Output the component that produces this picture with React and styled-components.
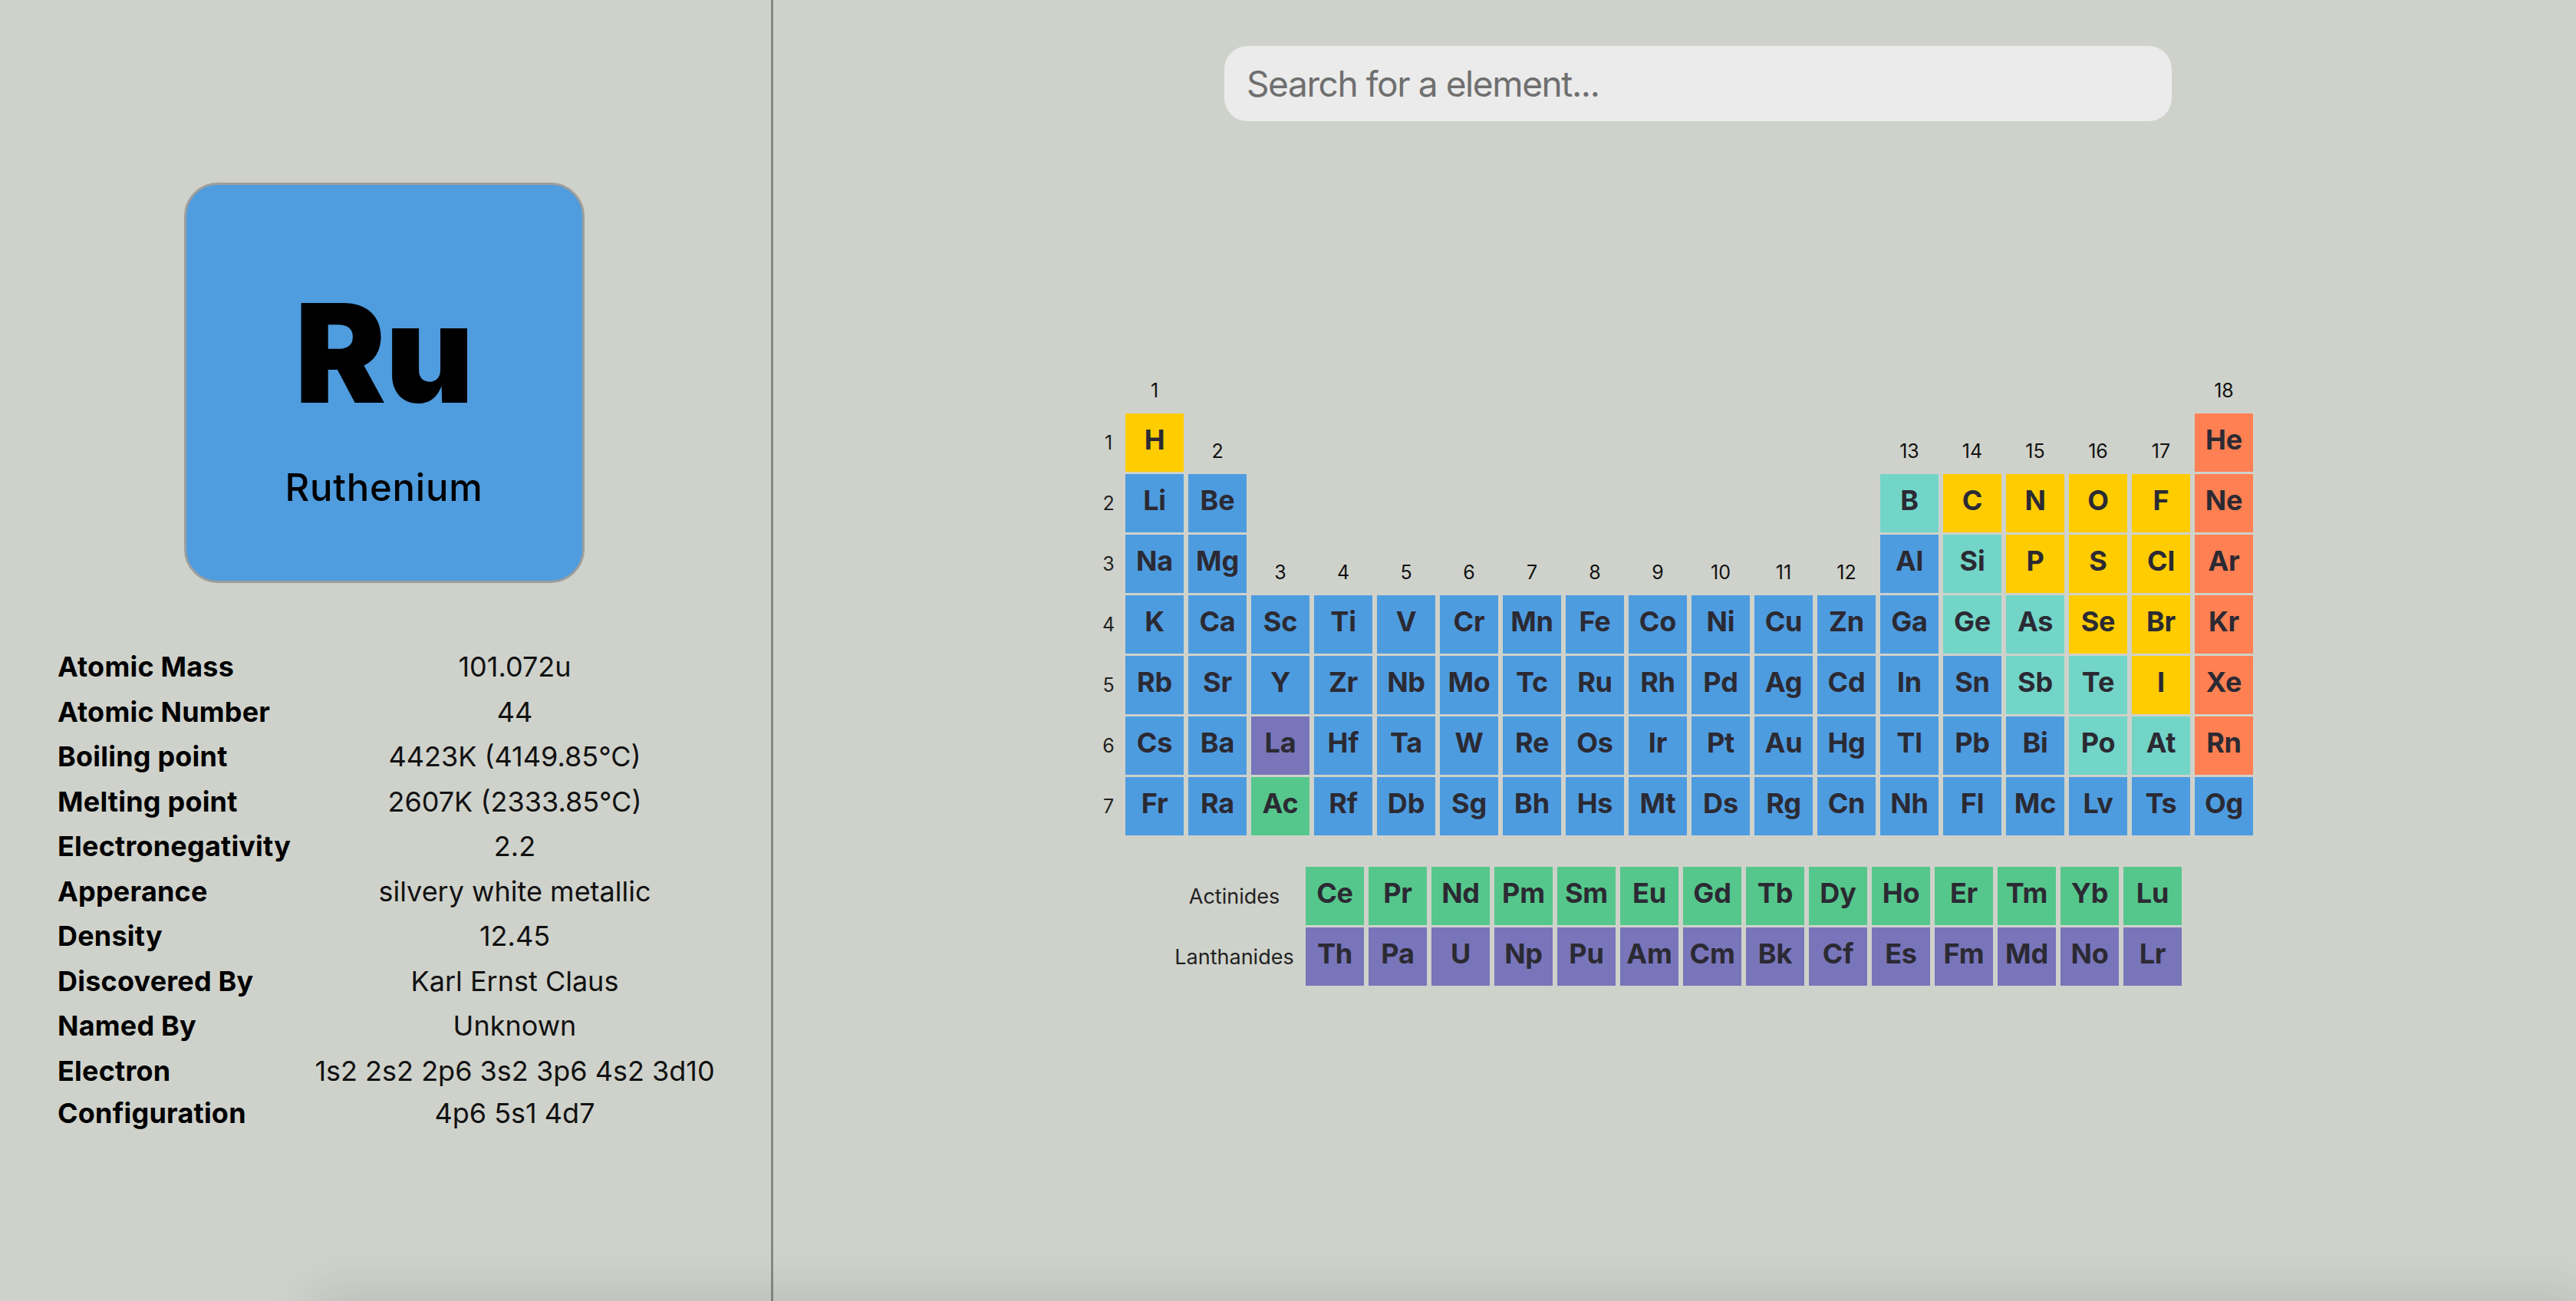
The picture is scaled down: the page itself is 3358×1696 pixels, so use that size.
import React from "react";
import styled, { createGlobalStyle } from "styled-components";

const GlobalStyle = createGlobalStyle`
  *, *::before, *::after { box-sizing: border-box; }
  html, body { margin: 0; padding: 0; }
  body {
    background: #cfd2cb;
    font-family: "Inter", "Liberation Sans", sans-serif;
    color: #111;
    overflow: hidden;
  }
`;

const COLORS = {
  blue: "#4e9ce0",
  yellow: "#ffcc00",
  teal: "#72d5c8",
  orange: "#ff8052",
  green: "#56c78c",
  purple: "#7875ba",
};

const YELLOW = ["H", "C", "N", "O", "F", "P", "S", "Cl", "Se", "Br", "I"];
const TEAL = ["B", "Si", "Ge", "As", "Sb", "Te", "Po", "At"];
const ORANGE = ["He", "Ne", "Ar", "Kr", "Xe", "Rn"];

const kindOf = (s) => {
  if (YELLOW.includes(s)) return "yellow";
  if (TEAL.includes(s)) return "teal";
  if (ORANGE.includes(s)) return "orange";
  if (s === "La") return "purple";
  if (s === "Ac") return "green";
  return "blue";
};

const ROWS = [
  [[1, "H"], [18, "He"]],
  [[1, "Li"], [2, "Be"], [13, "B"], [14, "C"], [15, "N"], [16, "O"], [17, "F"], [18, "Ne"]],
  [[1, "Na"], [2, "Mg"], [13, "Al"], [14, "Si"], [15, "P"], [16, "S"], [17, "Cl"], [18, "Ar"]],
  "K Ca Sc Ti V Cr Mn Fe Co Ni Cu Zn Ga Ge As Se Br Kr".split(" ").map((s, i) => [i + 1, s]),
  "Rb Sr Y Zr Nb Mo Tc Ru Rh Pd Ag Cd In Sn Sb Te I Xe".split(" ").map((s, i) => [i + 1, s]),
  "Cs Ba La Hf Ta W Re Os Ir Pt Au Hg Tl Pb Bi Po At Rn".split(" ").map((s, i) => [i + 1, s]),
  "Fr Ra Ac Rf Db Sg Bh Hs Mt Ds Rg Cn Nh Fl Mc Lv Ts Og".split(" ").map((s, i) => [i + 1, s]),
];

const GROUP_ROW = (g) => {
  if (g === 1 || g === 18) return 1;
  if (g === 2 || (g >= 13 && g <= 17)) return 2;
  return 4;
};

const ACTINIDES = "Ce Pr Nd Pm Sm Eu Gd Tb Dy Ho Er Tm Yb Lu".split(" ");
const LANTHANIDES = "Th Pa U Np Pu Am Cm Bk Cf Es Fm Md No Lr".split(" ");

const DETAILS = [
  ["Atomic Mass", "101.072u"],
  ["Atomic Number", "44"],
  ["Boiling point", "4423K (4149.85°C)"],
  ["Melting point", "2607K (2333.85°C)"],
  ["Electronegativity", "2.2"],
  ["Apperance", "silvery white metallic"],
  ["Density", "12.45"],
  ["Discovered By", "Karl Ernst Claus"],
  ["Named By", "Unknown"],
  [
    <>Electron<br />Configuration</>,
    <>1s2 2s2 2p6 3s2 3p6 4s2 3d10<br />4p6 5s1 4d7</>,
  ],
];

/* ---------- layout ---------- */

const Page = styled.div`
  display: flex;
  width: 100%;
  height: 1696px;
  position: relative;
`;

const Sidebar = styled.aside`
  width: 1008px;
  flex-shrink: 0;
  height: 100%;
  border-right: 3px solid #868a84;
  display: flex;
  flex-direction: column;
  align-items: center;
  padding-top: 238px;
`;

const ElementCard = styled.div`
  width: 522px;
  height: 522px;
  margin-left: -4px;
  border: 3px solid #9d9e9c;
  border-radius: 44px;
  background: #4f9cdf;
  display: flex;
  flex-direction: column;
  align-items: center;
  padding-top: 132px;
`;

const BigSymbol = styled.div`
  font-size: 178px;
  font-weight: 900;
  line-height: 176px;
  color: #000;
  letter-spacing: -1px;
`;

const BigName = styled.div`
  margin-top: 58px;
  font-size: 49px;
  font-weight: 500;
  line-height: 57px;
  color: #000;
  letter-spacing: 0.8px;
`;

const DetailsGrid = styled.div`
  align-self: flex-start;
  margin-left: 75px;
  margin-top: 82px;
  display: grid;
  grid-template-columns: 316px 560px;
  row-gap: 3px;
  font-size: 36px;
  line-height: 55.5px;
`;

const DetailLabel = styled.div`
  font-weight: 700;
  color: #000;
  letter-spacing: 0.2px;
  white-space: nowrap;
`;

const DetailValue = styled.div`
  font-weight: 400;
  text-align: center;
  color: #111;
  letter-spacing: 0;
  white-space: nowrap;
`;

const Main = styled.main`
  flex: 1;
  display: flex;
  flex-direction: column;
  padding-top: 60px;
`;

const Search = styled.input`
  width: 1235px;
  height: 98px;
  margin-left: 588px;
  border: none;
  outline: none;
  border-radius: 30px;
  background: #ebebeb;
  padding: 0 0 0 29px;
  font-family: "Inter", "Liberation Sans", sans-serif;
  font-size: 46px;
  letter-spacing: -1.4px;
  color: #333;
  &::placeholder { color: #6f6f6f; }
`;

const TableGrid = styled.div`
  margin-top: 302px;
  margin-left: 421px;
  display: grid;
  grid-template-columns: 32px repeat(18, 76px);
  grid-template-rows: repeat(8, 76px);
  column-gap: 6px;
  row-gap: 3px;
`;

const Cell = styled.div`
  grid-column: ${(p) => p.$col};
  grid-row: ${(p) => p.$row};
  background: ${(p) => COLORS[p.$kind]};
  display: flex;
  align-items: center;
  justify-content: center;
  padding-bottom: 9px;
  font-size: 36px;
  font-weight: 700;
  color: #2b2a33;
  letter-spacing: -0.2px;
`;

const GroupLabel = styled.div`
  grid-column: ${(p) => p.$col};
  grid-row: ${(p) => p.$row};
  display: flex;
  align-items: flex-end;
  justify-content: center;
  padding-bottom: 12px;
  font-size: 25px;
  line-height: 30px;
  color: #111;
`;

const PeriodLabel = styled.div`
  grid-column: 1;
  grid-row: ${(p) => p.$row};
  display: flex;
  align-items: center;
  justify-content: center;
  font-size: 25px;
  color: #222;
`;

const FBlock = styled.div`
  margin-top: 41px;
  margin-left: 514px;
  display: grid;
  grid-template-columns: 174px repeat(14, 76px);
  grid-auto-rows: 76px;
  column-gap: 6px;
  row-gap: 3px;
`;

const SeriesLabel = styled.div`
  display: flex;
  align-items: center;
  justify-content: center;
  font-size: 27px;
  color: #222;
`;

const FCell = styled(Cell)`
  grid-column: auto;
  grid-row: auto;
`;

const BottomShade = styled.div`
  position: absolute;
  left: 420px;
  right: 0;
  bottom: -40px;
  height: 40px;
  box-shadow: 0 0 60px 12px rgba(0, 0, 0, 0.1);
  pointer-events: none;
`;

export default function App() {
  return (
    <>
      <GlobalStyle />
      <Page>
        <Sidebar>
          <ElementCard>
            <BigSymbol>Ru</BigSymbol>
            <BigName>Ruthenium</BigName>
          </ElementCard>
          <DetailsGrid>
            {DETAILS.map(([label, value], i) => (
              <React.Fragment key={i}>
                <DetailLabel>{label}</DetailLabel>
                <DetailValue>{value}</DetailValue>
              </React.Fragment>
            ))}
          </DetailsGrid>
        </Sidebar>
        <Main>
          <Search placeholder="Search for a element..." />
          <TableGrid>
            {Array.from({ length: 18 }, (_, i) => i + 1).map((g) => (
              <GroupLabel key={"g" + g} $col={g + 1} $row={GROUP_ROW(g)}>
                {g}
              </GroupLabel>
            ))}
            {ROWS.map((row, ri) => (
              <React.Fragment key={"r" + ri}>
                <PeriodLabel $row={ri + 2}>{ri + 1}</PeriodLabel>
                {row.map(([col, sym]) => (
                  <Cell key={sym} $col={col + 1} $row={ri + 2} $kind={kindOf(sym)}>
                    {sym}
                  </Cell>
                ))}
              </React.Fragment>
            ))}
          </TableGrid>
          <FBlock>
            <SeriesLabel>Actinides</SeriesLabel>
            {ACTINIDES.map((s) => (
              <FCell key={s} $kind="green">{s}</FCell>
            ))}
            <SeriesLabel>Lanthanides</SeriesLabel>
            {LANTHANIDES.map((s) => (
              <FCell key={s} $kind="purple">{s}</FCell>
            ))}
          </FBlock>
        </Main>
        <BottomShade />
      </Page>
    </>
  );
}
